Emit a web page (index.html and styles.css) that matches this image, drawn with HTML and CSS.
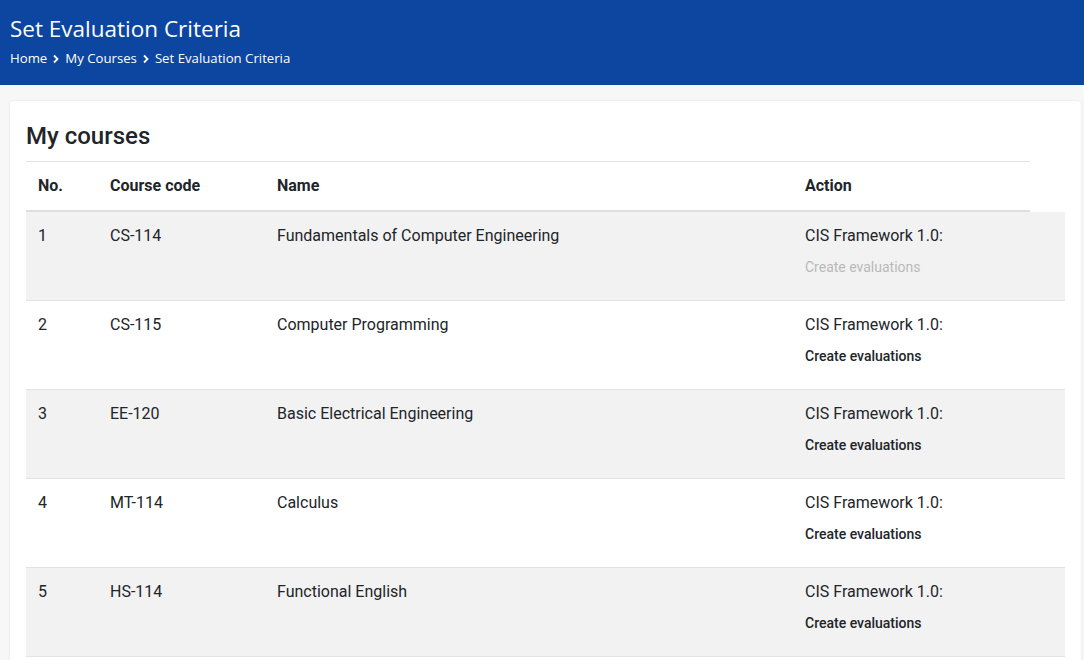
FILE: index.html
```html
<!DOCTYPE html>
<html lang="en">
<head>
<meta charset="utf-8">
<title>Set Evaluation Criteria</title>
<link rel="stylesheet" href="styles.css">
</head>
<body>
<header class="page-header">
  <h1 class="page-title">Set Evaluation Criteria</h1>
  <nav class="breadcrumb">
    <a href="#">Home</a>
    <svg class="chev" viewBox="0 0 8 10" width="8" height="10"><path d="M2 1.5 L5.5 5 L2 8.5" fill="none" stroke="#fff" stroke-width="1.8"/></svg>
    <a href="#">My Courses</a>
    <svg class="chev" viewBox="0 0 8 10" width="8" height="10"><path d="M2 1.5 L5.5 5 L2 8.5" fill="none" stroke="#fff" stroke-width="1.8"/></svg>
    <span>Set Evaluation Criteria</span>
  </nav>
</header>
<main class="main">
  <section class="card">
    <h2 class="card-title">My courses</h2>
    <div class="table">
      <div class="row head">
        <div class="cell">No.</div>
        <div class="cell">Course code</div>
        <div class="cell">Name</div>
        <div class="cell">Action</div>
      </div>
      <div class="row odd">
        <div class="cell">1</div>
        <div class="cell">CS-114</div>
        <div class="cell">Fundamentals of Computer Engineering</div>
        <div class="cell"><div>CIS Framework 1.0:</div><a class="act disabled" href="#">Create evaluations</a></div>
      </div>
      <div class="row">
        <div class="cell">2</div>
        <div class="cell">CS-115</div>
        <div class="cell">Computer Programming</div>
        <div class="cell"><div>CIS Framework 1.0:</div><a class="act" href="#">Create evaluations</a></div>
      </div>
      <div class="row odd">
        <div class="cell">3</div>
        <div class="cell">EE-120</div>
        <div class="cell">Basic Electrical Engineering</div>
        <div class="cell"><div>CIS Framework 1.0:</div><a class="act" href="#">Create evaluations</a></div>
      </div>
      <div class="row">
        <div class="cell">4</div>
        <div class="cell">MT-114</div>
        <div class="cell">Calculus</div>
        <div class="cell"><div>CIS Framework 1.0:</div><a class="act" href="#">Create evaluations</a></div>
      </div>
      <div class="row odd">
        <div class="cell">5</div>
        <div class="cell">HS-114</div>
        <div class="cell">Functional English</div>
        <div class="cell"><div>CIS Framework 1.0:</div><a class="act" href="#">Create evaluations</a></div>
      </div>
    </div>
  </section>
</main>
</body>
</html>
```
FILE: styles.css
```css
* { box-sizing: border-box; }
html, body { margin: 0; padding: 0; }
body {
  background: #f7f7f7;
  font-family: Roboto, "Liberation Sans", sans-serif;
  color: #212529;
}
.page-header {
  background: #0c46a0;
  height: 85px;
  padding: 14px 10px 0;
  color: #fff;
  font-family: "Open Sans", "Noto Sans", sans-serif;
}
.page-title {
  margin: 0;
  font-size: 22.5px;
  font-weight: 400;
  line-height: 30px;
}
.breadcrumb {
  display: flex;
  align-items: center;
  gap: 5px;
  margin-top: 4px;
  font-size: 13.2px;
  line-height: 20px;
}
.breadcrumb a, .breadcrumb span { color: #fff; text-decoration: none; }
.chev { display: block; margin: 2px 0 0; }
.main {
  padding: 16px 3px 0 10px;
}
.card {
  background: #fff;
  border-radius: 4px;
  box-shadow: 0 0 3px rgba(0,0,0,0.08);
  padding: 20px 16px 0;
  min-height: 600px;
}
.card-title {
  margin: 0 0 10px;
  font-size: 24px;
  font-weight: 500;
  line-height: 30px;
  color: #212529;
}
.row {
  display: grid;
  grid-template-columns: 72px 167px 528px 1fr;
  font-size: 16px;
  line-height: 24px;
  border-bottom: 1px solid #e0e2e6;
}
.row .cell { padding: 12px 12px 21px; }
.row.odd { background: #f2f2f2; }
.row.head {
  margin-right: 35px;
  border-top: 1px solid #e3e4e8;
  border-bottom: 2px solid #dcdee3;
  font-weight: 700;
}
.row.head .cell { padding: 12px 12px 12px; }
.act {
  display: block;
  margin-top: 7px;
  font-size: 14px;
  font-weight: 500;
  color: #212529;
  text-decoration: none;
}
.act.disabled { color: #b9b9b9; font-weight: 400; }
```
